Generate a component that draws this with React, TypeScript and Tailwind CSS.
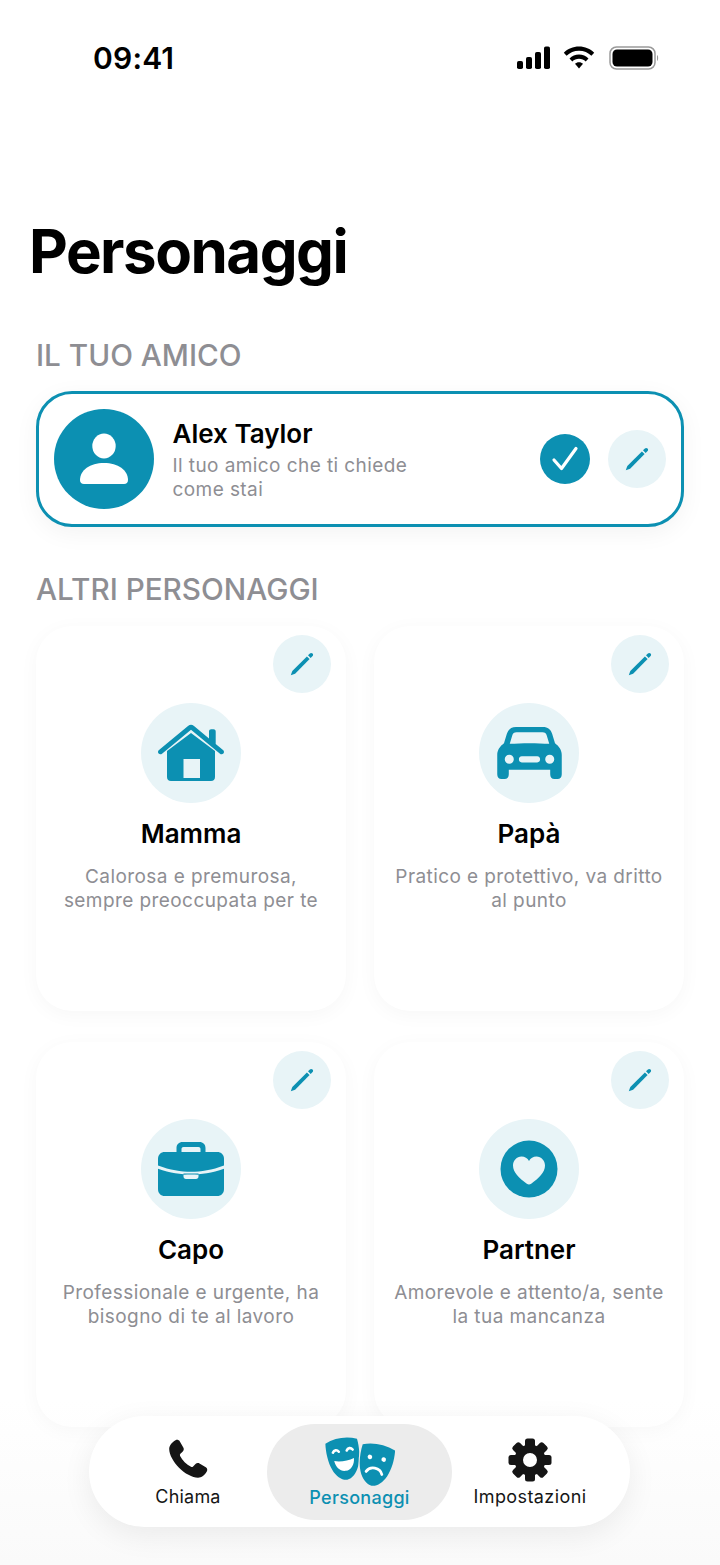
import React from "react";

const T = "#0c90b2";

function Pencil() {
  return (
    <svg width="28" height="28" viewBox="0 0 28 28" fill={T}>
      <path d="M2.800 25.200 L4.300 20.900 L18.900 6.400 L21.600 9.100 L7.100 23.700 Z" />
      <path d="M20 5.300 L21.900 3.400 C22.700 2.700 23.800 2.700 24.500 3.500 C25.300 4.200 25.300 5.300 24.600 6.100 L22.700 8 Z" />
    </svg>
  );
}

function EditButton({ extra }: { extra: string }) {
  return (
    <div className={`flex h-[58px] w-[58px] shrink-0 items-center justify-center rounded-full bg-[#e8f4f7] ${extra}`}>
      <Pencil />
    </div>
  );
}

function House() {
  return (
    <svg width="68" height="60" viewBox="0 0 68 60" fill={T}>
      <path d="M10 28 L34 10 L58 28 V54 C58 56.500 56.500 58 54 58 H14 C11.500 58 10 56.500 10 54 Z M26.500 36 V55 H43 V36 Z" fillRule="evenodd" />
      <path d="M2 27 L31 3 C33 1.400 35 1.400 37 3 L52 15.400 V8.500 C52 7.200 53 6.300 54.200 6.300 H56.500 C57.700 6.300 58.700 7.200 58.700 8.500 V21 L66 27 C67.200 28 67.300 29.500 66.400 30.500 C65.500 31.500 64 31.600 63 30.700 L34 6.700 L5 30.700 C4 31.600 2.500 31.500 1.600 30.500 C0.700 29.500 0.800 28 2 27 Z" />
    </svg>
  );
}

function Car() {
  return (
    <svg width="67" height="52" viewBox="0 0 68 54" fill={T}>
      <path
        fillRule="evenodd"
        d="M20 0 H48 C53 0 56 2.500 57.500 7 L60.500 17 C64.500 20 67.500 24 67.500 29 V49 C67.500 52 66 54 63 54 H60 C57 54 55.500 52 55.500 49 V44.500 H12.500 V49 C12.500 52 11 54 8 54 H5 C2 54 0.500 52 0.500 49 V29 C0.500 24 3.500 20 7.500 17 L10.500 7 C12 2.500 15 0 20 0 Z M20.500 5.500 C18 5.500 16.800 6.500 16 9 L13.500 17.500 C26 16.500 42 16.500 54.500 17.500 L52 9 C51.200 6.500 50 5.500 47.500 5.500 Z M13 28.800 A4.700 4.700 0 1 0 13 38.200 A4.700 4.700 0 1 0 13 28.800 Z M55 28.800 A4.700 4.700 0 1 0 55 38.200 A4.700 4.700 0 1 0 55 28.800 Z M26 30.400 C24 30.400 23 31.800 23 33.600 C23 35.400 24 36.800 26 36.800 H42 C44 36.800 45 35.400 45 33.600 C45 31.800 44 30.400 42 30.400 Z"
      />
    </svg>
  );
}

function Briefcase() {
  return (
    <svg width="66" height="54" viewBox="0 0 66 54" fill={T}>
      <path fillRule="evenodd" d="M18.500 11 V6 C18.500 2.500 21 0 24.500 0 H41.500 C45 0 47.500 2.500 47.500 6 V11 H42.500 V7 C42.500 5.800 41.700 5 40.500 5 H25.500 C24.300 5 23.500 5.800 23.500 7 V11 Z" />
      <path d="M7 10 H59 C63.300 10 66 12.700 66 17 V23.500 C54 28 43 29.800 33 29.800 C23 29.800 12 28 0 23.500 V17 C0 12.700 2.700 10 7 10 Z" />
      <path fillRule="evenodd" d="M0 26.800 C12 31 23 32.600 33 32.600 C43 32.600 54 31 66 26.800 V47 C66 51.300 63.300 54 59 54 H7 C2.700 54 0 51.300 0 47 Z M25.500 31.500 V34.500 C25.500 36 26.500 37 28 37 H38 C39.500 37 40.500 36 40.500 34.500 V31.500 Z" />
    </svg>
  );
}

function HeartBadge() {
  return (
    <svg width="58" height="58" viewBox="0 0 58 58">
      <circle cx="29" cy="29" r="28.500" fill={T} />
      <path
        fill="#e8f4f7"
        d="M29 44.500 C28.300 44.500 27.500 44.200 26.800 43.700 C19 38 13 32.500 13 25.500 C13 20.500 16.800 16.500 21.500 16.500 C24.800 16.500 27.500 18.200 29 21 C30.500 18.200 33.200 16.500 36.500 16.500 C41.200 16.500 45 20.500 45 25.500 C45 32.500 39 38 31.200 43.700 C30.500 44.200 29.700 44.500 29 44.500 Z"
      />
    </svg>
  );
}

function Masks() {
  return (
    <svg width="70" height="56" viewBox="0 0 70 56">
      <g transform="rotate(-9 19 24)">
        <path fill={T} d="M3 6 C13 1.500 25 1.500 35 6 C36 14 35.500 25 32 33 C29 40 24 45 19 45 C14 45 8.500 40 5.800 33 C2.500 25 2 14 3 6 Z" />
        <path fill="none" stroke="#fff" strokeWidth="2.600" strokeLinecap="round" d="M9 16 C10.500 13.500 13.500 13.500 15 16 M23 16 C24.500 13.500 27.500 13.500 29 16" />
        <path fill="#fff" d="M9 24.500 C15 26.500 23 26.500 29 24.500 C28.500 31 24.500 36 19 36 C13.500 36 9.500 31 9 24.500 Z" />
      </g>
      <g transform="rotate(11 50 30)">
        <path fill={T} stroke="#ececec" strokeWidth="2" paintOrder="stroke" d="M34 12 C44 8 56 8 67 12 C68 20 67.500 31 64 39 C61 46 55.500 51 50.500 51 C45.500 51 40 46 37 39 C33.500 31 33 20 34 12 Z" />
        <circle cx="43.500" cy="23" r="2.300" fill="#fff" />
        <circle cx="57.500" cy="23" r="2.300" fill="#fff" />
        <path fill="none" stroke="#fff" strokeWidth="2.800" strokeLinecap="round" d="M42.500 38 C45.500 31.500 55.500 31.500 58.500 38" />
      </g>
    </svg>
  );
}

function Phone() {
  return (
    <svg width="40" height="40" viewBox="0 0 40 40" fill="#151515">
      <path d="M7.500 1.200 C9 0.300 10.800 0.800 11.700 2.200 L15.300 8.500 C16.100 9.900 15.900 11.400 14.800 12.500 L12.400 14.800 C11.800 15.400 11.700 16.100 12.100 16.900 C14.500 21.500 18.300 25.400 23 27.800 C23.800 28.200 24.500 28.100 25.100 27.500 L27.500 25.100 C28.600 24 30.100 23.800 31.500 24.600 L37.800 28.200 C39.300 29.100 39.700 31 38.800 32.500 C36.800 36 33.500 38.700 30 38.700 C24.500 38.700 16.500 34.500 11 28.800 C5.400 23.200 1.200 15.500 1.200 10 C1.200 6.500 4 3.200 7.500 1.200 Z" />
    </svg>
  );
}

function Gear() {
  const teeth = [0, 45, 90, 135, 180, 225, 270, 315];
  return (
    <svg width="44" height="44" viewBox="0 0 44 44" fill="#151515">
      {teeth.map((a) => (
        <rect key={a} x="17" y="0.500" width="10" height="12" rx="2.500" transform={`rotate(${a} 22 22)`} />
      ))}
      <path
        fillRule="evenodd"
        d="M22 6.500 A15.500 15.500 0 1 0 22 37.500 A15.500 15.500 0 1 0 22 6.500 Z M22 15 A7 7 0 1 1 22 29 A7 7 0 1 1 22 15 Z"
      />
    </svg>
  );
}

function Battery() {
  return (
    <svg width="50" height="26" viewBox="0 0 50 26">
      <rect x="1" y="2" width="45" height="22" rx="6.500" fill="none" stroke="#9a9a9a" strokeWidth="1.500" />
      <rect x="3.500" y="4.500" width="40" height="17" rx="4.500" fill="#000" />
      <path d="M48 10 C49.500 10.500 49.500 15.500 48 16 Z" fill="#9a9a9a" />
    </svg>
  );
}

function Signal() {
  return (
    <svg width="36" height="24" viewBox="0 0 36 24" fill="#000">
      <rect x="1" y="15" width="6" height="8" rx="1.800" />
      <rect x="10" y="11" width="6" height="12" rx="1.800" />
      <rect x="19" y="6" width="6" height="17" rx="1.800" />
      <rect x="28" y="0.500" width="6" height="22.500" rx="1.800" />
    </svg>
  );
}

function Wifi() {
  return (
    <svg width="32" height="24" viewBox="0 0 32 24" fill="#000">
      <path d="M16 0.500 C22 0.500 27.300 2.800 31.200 6.700 L28.400 9.800 C25.200 6.700 20.800 4.800 16 4.800 C11.200 4.800 6.800 6.700 3.600 9.800 L0.800 6.700 C4.700 2.800 10 0.500 16 0.500 Z" />
      <path d="M16 8.500 C19.700 8.500 23 9.900 25.500 12.400 L22.700 15.400 C21 13.700 18.600 12.700 16 12.700 C13.400 12.700 11 13.700 9.300 15.400 L6.500 12.400 C9 9.900 12.300 8.500 16 8.500 Z" />
      <path d="M16 16.300 C17.600 16.300 19 16.900 20 17.800 L16 22.500 L12 17.800 C13 16.900 14.400 16.300 16 16.300 Z" />
    </svg>
  );
}

const people = [
  { name: "Mamma", icon: <House />, l1: "Calorosa e premurosa,", l2: "sempre preoccupata per te" },
  { name: "Papà", icon: <Car />, l1: "Pratico e protettivo, va dritto", l2: "al punto" },
  { name: "Capo", icon: <Briefcase />, l1: "Professionale e urgente, ha", l2: "bisogno di te al lavoro" },
  { name: "Partner", icon: <HeartBadge />, l1: "Amorevole e attento/a, sente", l2: "la tua mancanza" },
];

export default function App() {
  return (
    <div className="relative h-[1565px] w-[720px] overflow-hidden bg-white font-['Inter',sans-serif] text-black">
      <div className="flex h-[116px] items-center justify-between pl-[93px] pr-[61px]">
        <span className="text-[30px] font-semibold leading-none tracking-[0.2px]">09:41</span>
        <div className="flex items-center gap-[11px]">
          <Signal />
          <Wifi />
          <div className="ml-[3px]">
            <Battery />
          </div>
        </div>
      </div>

      <h1 className="mt-[100px] pl-[29px] text-[60px] font-bold leading-[70px] tracking-[-1.5px]">Personaggi</h1>

      <div className="px-[36px]">
        <h2 className="mt-[49px] text-[29.7px] font-medium leading-[40px] text-[#8e8e93]">IL TUO AMICO</h2>

        <div className="mt-[16px] flex h-[136px] items-center rounded-[36px] border-[3.5px] border-[#0c90b2] bg-white pl-[14.5px] pr-[15.5px] shadow-[0_6px_24px_rgba(0,0,0,0.05)]">
          <div className="flex h-[100px] w-[100px] shrink-0 items-center justify-center rounded-full bg-[#0c90b2]">
            <svg width="50" height="52" viewBox="0 0 50 52" fill="#fff">
              <ellipse cx="25" cy="13" rx="11.700" ry="12.500" />
              <path d="M1 47 C1 37 11 30 25 30 C39 30 49 37 49 47 C49 49.500 47.500 51 45 51 H5 C2.500 51 1 49.500 1 47 Z" />
            </svg>
          </div>
          <div className="ml-[19px] flex-1">
            <div className="text-[26px] font-[560] leading-[34px]">Alex Taylor</div>
            <div className="mt-[3px] w-[260px] text-[19px] leading-[24px] tracking-[0.42px] text-[#8e8e93]">
              Il tuo amico che ti chiede come stai
            </div>
          </div>
          <div className="flex h-[50px] w-[50px] shrink-0 items-center justify-center rounded-full bg-[#0c90b2]">
            <svg width="28" height="26" viewBox="0 0 28 26" fill="none" stroke="#fff" strokeWidth="3.200" strokeLinecap="round" strokeLinejoin="round">
              <path d="M3 14 L10.500 22.500 L25 2.500" />
            </svg>
          </div>
          <EditButton extra="ml-[18px]" />
        </div>

        <h2 className="mt-[42px] text-[29.7px] font-medium leading-[40px] text-[#8e8e93]">ALTRI PERSONAGGI</h2>

        <div className="mt-[17px] grid grid-cols-2 gap-x-[28px] gap-y-[31px]">
          {people.map((p) => (
            <div key={p.name} className="relative flex h-[385px] flex-col items-center rounded-[36px] bg-white pt-[77px] shadow-[0_4px_20px_rgba(0,0,0,0.035)]">
              <EditButton extra="absolute right-[15px] top-[9px]" />
              <div className="flex h-[100px] w-[100px] items-center justify-center rounded-full bg-[#e8f4f7]">{p.icon}</div>
              <div className="mt-[14px] text-[26px] font-[560] leading-[34px]">{p.name}</div>
              <div className="mt-[14px] whitespace-nowrap text-center text-[19px] leading-[24px] tracking-[0.42px] text-[#8e8e93]">
                <div>{p.l1}</div>
                <div>{p.l2}</div>
              </div>
            </div>
          ))}
        </div>
      </div>

      <div className="absolute bottom-0 left-0 right-0 h-[165px] bg-gradient-to-b from-[rgba(255,255,255,0)] to-[#fafafa]" />

      <div className="absolute bottom-[38px] left-[89px] flex h-[111px] w-[541px] items-center rounded-[56px] bg-white pl-[20px] shadow-[0_8px_30px_rgba(0,0,0,0.07)]">
        <div className="flex h-[96px] w-[158px] flex-col items-center justify-center pt-[4px]">
          <Phone />
          <span className="mt-[7px] text-[18px] leading-[22px] tracking-[0.2px] text-[#151515]">Chiama</span>
        </div>
        <div className="flex h-[96px] w-[185px] flex-col items-center justify-center rounded-[48px] bg-[#ececec]">
          <Masks />
          <span className="mt-[-4px] text-[18px] font-medium leading-[22px] tracking-[0.3px] text-[#0c90b2]">Personaggi</span>
        </div>
        <div className="flex h-[96px] w-[156px] flex-col items-center justify-center pt-[3px]">
          <Gear />
          <span className="mt-[4px] text-[18px] leading-[22px] tracking-[0.4px] text-[#151515]">Impostazioni</span>
        </div>
      </div>
    </div>
  );
}
